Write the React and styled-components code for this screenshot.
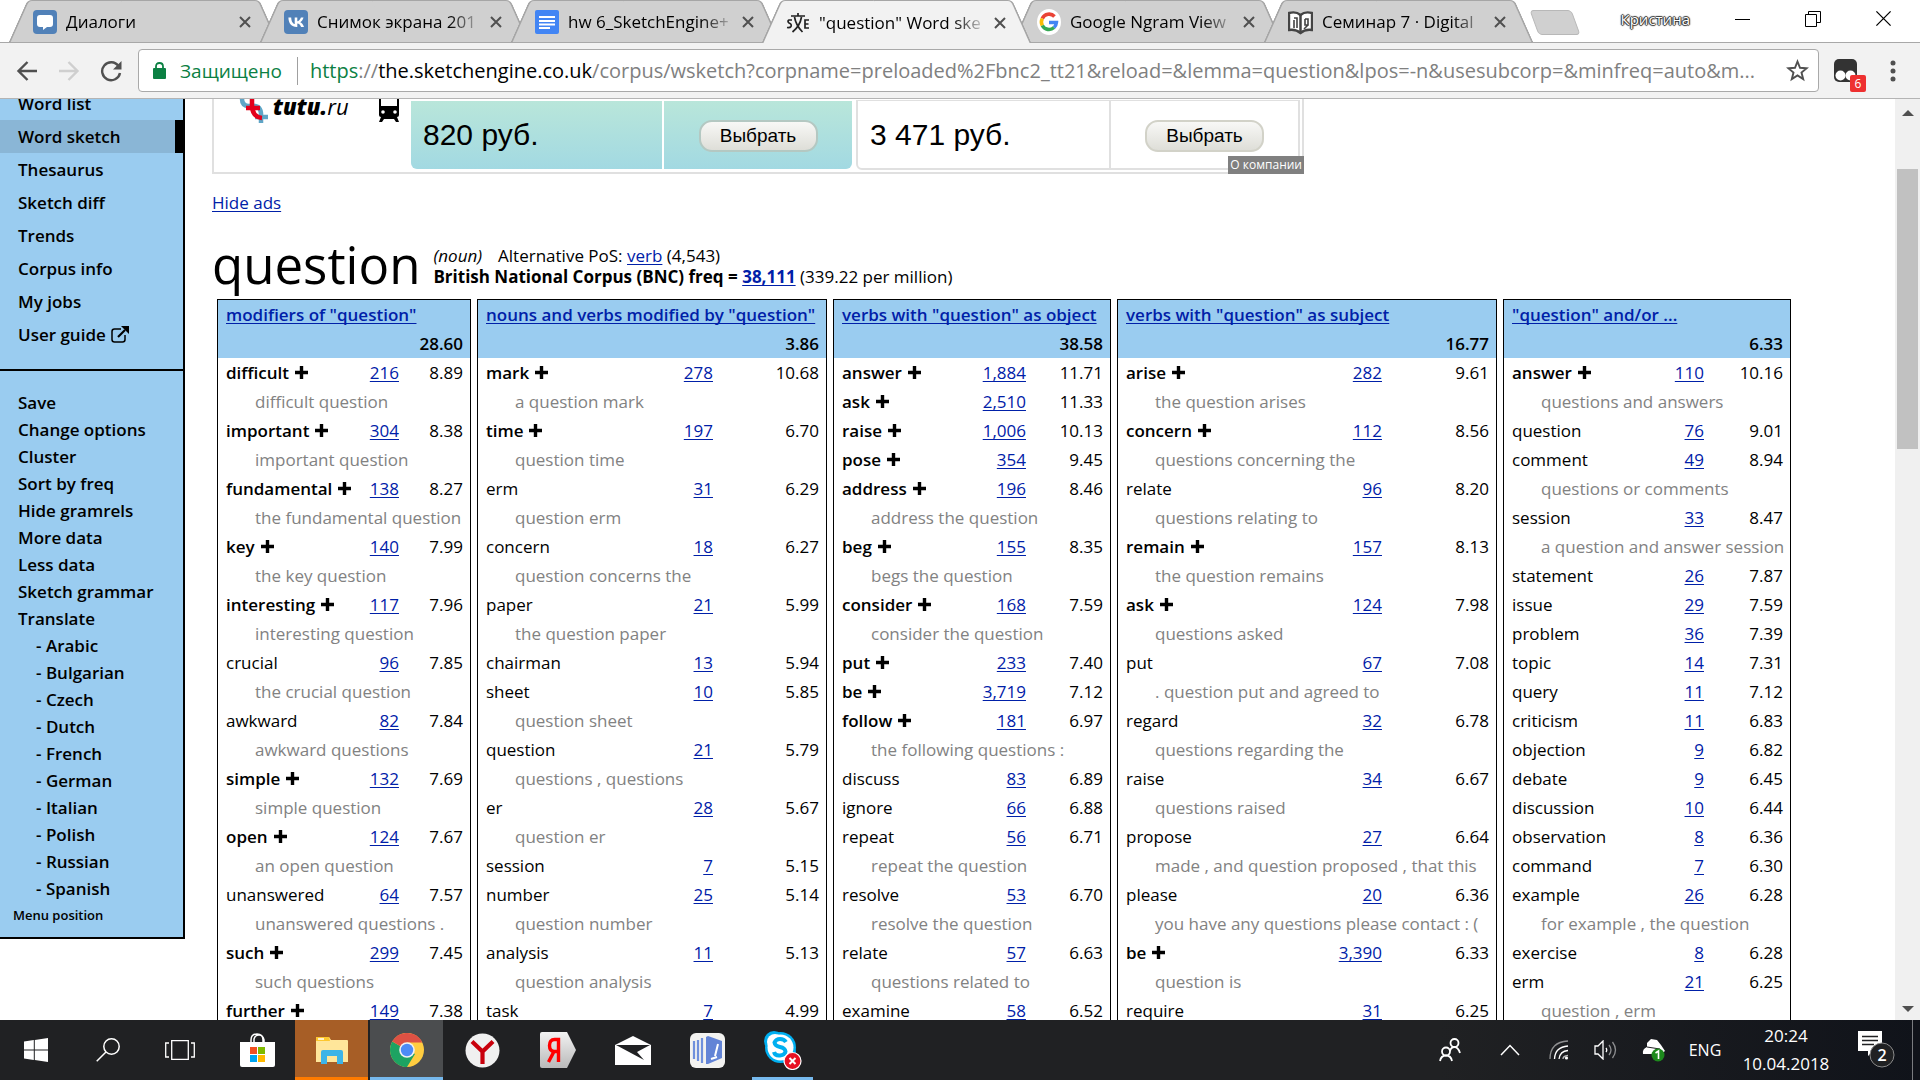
import React from "react";
import styled, { createGlobalStyle, css } from "styled-components";

const pageFont = `"Trebuchet MS", "Open Sans", "Noto Sans", sans-serif`;
const uiFont = `"Segoe UI", "Open Sans", "Noto Sans", sans-serif`;

const GlobalStyle = createGlobalStyle`
  * { box-sizing: border-box; }
  body { margin: 0; background: #fff; font-family: ${pageFont}; color: #000; }
  button { border: 0; padding: 0; margin: 0; background: none; font: inherit; color: inherit; }
  svg { display: block; flex: none; }
`;

const Screen = styled.div`
  height: 100vh;
  display: flex;
  flex-direction: column;
  overflow: hidden;
`;

/* ---------- browser window ---------- */

const TabStrip = styled.header`
  display: flex;
  height: 43px;
  flex: none;
  padding-left: 8px;
  border-bottom: 1px solid #a8a8a8;
  font-family: ${uiFont};
`;

const TabItem = styled.div`
  position: relative;
  display: flex;
  align-items: center;
  gap: 9px;
  flex: 0 1 271px;
  min-width: 0;
  height: ${(p) => (p.$active ? "43px" : "42px")};
  margin-right: -20px;
  padding: 2px 40px 0 25px;
  z-index: ${(p) => (p.$active ? 2 : 1)};
  isolation: isolate;

  &::before,
  &::after {
    content: "";
    position: absolute;
    z-index: -1;
    top: 0;
    bottom: 0;
    background: ${(p) => (p.$active ? "#f2f2f2" : "#d0d0d0")};
    border-top: 1px solid #a6a6a6;
  }
  &::before {
    left: 10px;
    right: 45%;
    border-left: 2px solid #a6a6a6;
    border-top-left-radius: 5px;
    transform: skewX(-24deg);
  }
  &::after {
    right: 10px;
    left: 45%;
    border-right: 2px solid #a6a6a6;
    border-top-right-radius: 5px;
    transform: skewX(24deg);
  }
`;

const TabTitle = styled.span`
  flex: 1;
  white-space: nowrap;
  font-size: 17px;
  line-height: 24px;
  mask-image: linear-gradient(to right, #000 calc(100% - 28px), rgba(0, 0, 0, 0.2));
`;

const TabClose = styled.button`
  width: 12px;
  height: 12px;
  margin-left: 4px;
  margin-right: -12px;
`;

const NewTab = styled.button`
  width: 42px;
  height: 25px;
  margin: 10px 0 0 20px;
  background: #d0d0d0;
  border: 1px solid #b8b8b8;
  border-radius: 4px;
  transform: skewX(20deg);
`;

const WindowControls = styled.div`
  margin-left: auto;
  display: flex;
  align-items: center;
  padding: 0 28px 5px 0;
  gap: 54px;
`;

const Profile = styled.button`
  font-size: 15px;
  line-height: 20px;
  color: #fff;
  text-shadow: 0 0 1px #222, 1px 0 1px #333, -1px 0 1px #333, 0 1px 1px #333, 0 -1px 1px #333;
  margin-right: -9px;
`;

const Toolbar = styled.nav`
  display: flex;
  align-items: center;
  height: 56px;
  flex: none;
  padding: 0 24px 0 16px;
  background: #f2f2f2;
  border-bottom: 1px solid #b4b4b4;
  font-family: ${uiFont};
`;

const NavButtons = styled.div`
  display: flex;
  gap: 20px;
  width: 122px;
`;

const AddressBar = styled.div`
  flex: 1;
  min-width: 0;
  display: flex;
  align-items: center;
  height: 43px;
  padding: 0 9px 0 14px;
  background: #fff;
  border: 1px solid #a9a9a9;
  border-radius: 4px;
  font-size: 20px;
  line-height: 28px;
`;

const Secure = styled.span`
  color: #0b8043;
  font-size: 19px;
  margin-left: 14px;
  padding-right: 15px;
  border-right: 1px solid #a0a0a0;
  margin-right: 12px;
`;

const UrlPart = styled.span`
  color: ${(p) => p.$color};
`;

const UrlInput = styled.input`
  flex: 1;
  min-width: 0;
  border: 0;
  padding: 0;
  outline: 0;
  background: none;
  font: inherit;
  color: #808080;
`;

const Extension = styled.button`
  position: relative;
  width: 24px;
  height: 24px;
  margin: 0 32px 0 15px;
`;

const Badge = styled.span`
  position: absolute;
  left: 16px;
  top: 16px;
  width: 16px;
  height: 17px;
  background: #ee3030;
  border-radius: 2px;
  color: #fff;
  font-size: 12px;
  line-height: 17px;
  text-align: center;
`;

const Viewport = styled.div`
  flex: 1;
  min-height: 0;
  display: flex;
`;

const PageArea = styled.div`
  flex: 1;
  min-width: 0;
  overflow: hidden;
`;

/* the page is scrolled, so its upper edge lies above the window */
const Page = styled.div`
  display: flex;
  align-items: flex-start;
  margin-top: -12px;
`;

const Scrollbar = styled.div`
  width: 25px;
  flex: none;
  display: flex;
  flex-direction: column;
  align-items: center;
  padding: 10px 0 8px;
  background: #f0f0f0;
`;

const Thumb = styled.div`
  width: 21px;
  height: 280px;
  margin: 53px 0 auto;
  background: #c1c1c1;
`;

const Arrow = styled.span`
  border: 6px solid transparent;
  ${(p) =>
    p.$down
      ? css`border-top-color: #505050; border-bottom: 0;`
      : css`border-bottom-color: #505050; border-top: 0; margin-top: 1px;`}
`;

/* ---------- left menu ---------- */

const Sidebar = styled.nav`
  width: 185px;
  flex: none;
  background: #9accf0;
  border-right: 2px solid #000;
  border-bottom: 2px solid #000;
  padding-bottom: 9px;
  font-size: 17px;
  font-weight: 600;
`;

const MenuLink = styled.a`
  display: flex;
  align-items: center;
  gap: 5px;
  height: ${(p) => (p.$small ? "27px" : "33px")};
  padding-left: ${(p) => (p.$indent ? "36px" : "18px")};
  color: #000;
  text-decoration: none;
  white-space: nowrap;
  ${(p) =>
    p.$current &&
    css`
      background: #8ab6d6;
      border-right: 8px solid #000;
    `}
`;

const MainMenu = styled.div`
  padding-bottom: 18px;
  border-bottom: 2px solid #000;
  margin-bottom: 18px;
`;

const MenuPosition = styled.a`
  display: block;
  padding-left: 13px;
  color: #000;
  text-decoration: none;
  font-size: 13px;
  line-height: 26px;
`;

/* ---------- advert ---------- */

const Main = styled.main`
  flex: 1;
  min-width: 0;
  padding: 0 104px 0 27px;
`;

const Ad = styled.section`
  position: relative;
  display: flex;
  align-items: flex-start;
  gap: 4px;
  width: 1092px;
  height: 87px;
  padding: 12px 2px 0 0;
  border: 2px solid #e0e0e0;
  border-top: 0;
  font-family: Arial, "Liberation Sans", sans-serif;
`;

const AdBrand = styled.div`
  display: flex;
  width: 193px;
  padding-left: 24px;
  font: italic 800 22px/14px "Open Sans", sans-serif;
`;

const BrandName = styled.span`
  width: 83px;
  margin: 0 23px 0 3px;
  white-space: nowrap;
`;

const Thin = styled.span`
  font-weight: 400;
`;

const Offer = styled.div`
  flex: ${(p) => (p.$hot ? "0 0 441px" : "1")};
  display: flex;
  height: ${(p) => (p.$hot ? "68px" : "70px")};
  margin-top: 2px;
  border-radius: 0 0 6px 6px;
  ${(p) =>
    p.$hot
      ? css`background: linear-gradient(#b9e6da, #a2d9e2);`
      : css`
          margin-top: 1px;
          border: 2px solid #e0e0e0;
          border-top-width: 1px;
        `}
`;

const Price = styled.div`
  width: 253px;
  padding: 16px 0 0 12px;
  font-size: 30px;
  line-height: 36px;
  border-right: 2px solid ${(p) => (p.$hot ? "#fff" : "#e0e0e0")};
`;

const Pick = styled.div`
  flex: 1;
  padding-top: 19px;
  text-align: center;
`;

const PickButton = styled.button`
  && {
    width: 119px;
    height: 32px;
    border: 2px solid ${(p) => (p.$hot ? "#b4c8c2" : "#d2d2c8")};
    border-radius: 13px;
    background: linear-gradient(#f8f8f6, #deded8);
    font-size: 19px;
    line-height: 24px;
  }
`;

const About = styled.a`
  position: absolute;
  right: -2px;
  bottom: -2px;
  padding: 0 2px;
  background: #808080;
  color: #fff;
  font: 12px/18px "Open Sans", sans-serif;
  text-decoration: none;
`;

/* ---------- word sketch ---------- */

const Link = styled.a`
  color: #0020a8;
  text-decoration: underline;
  text-underline-offset: 2px;
  text-decoration-skip-ink: none;
`;

const HideAds = styled.p`
  margin: 17px 0 0;
  font-size: 17px;
  line-height: 24px;
`;

const Heading = styled.div`
  display: flex;
  align-items: flex-start;
  gap: 13px;
  margin-top: 21px;
`;

const Lemma = styled.h1`
  margin: 0;
  font-size: 51px;
  line-height: 56px;
  font-weight: 400;
`;

const Info = styled.div`
  padding-top: 9px;
  font-size: 17px;
  line-height: 21px;
`;

const Pos = styled.em`
  margin-right: 16px;
`;

const Sketches = styled.div`
  display: grid;
  grid-template-columns: 254fr 350fr 278fr 380fr 288fr;
  gap: 6px;
  margin: 7px 0 0 5px;
`;

const Gramrel = styled.div`
  min-width: 0;
  border: 1px solid #000;
`;

const Table = styled.table`
  width: 100%;
  table-layout: fixed;
  border-collapse: collapse;
  font-size: 17px;
  line-height: 29px;

  td, th { padding: 0 7px 0 8px; white-space: nowrap; height: 29px; }
  th { background: #9accf0; font-weight: 600; }
`;

const Col = styled.col`
  width: ${(p) => p.$w}px;
`;

const Title = styled.th`
  text-align: left;
`;

const Score = styled.td`
  text-align: right;
`;

const Total = styled.th`
  text-align: right;
`;

const Freq = styled.td`
  && { padding-right: 0; }
  text-align: right;
`;

const Word = styled.td`
  font-weight: ${(p) => (p.$more ? 600 : 400)};
`;

const Example = styled.td`
  && { padding: 0 0 0 37px; }
  color: #828282;
`;

const PlusIcon = styled.svg`
  display: inline-block;
  margin-left: 6px;
`;

/* ---------- taskbar ---------- */

const Taskbar = styled.footer`
  display: flex;
  height: 60px;
  flex: none;
  background: linear-gradient(90deg, #202123 75%, #10131a);
  color: #fff;
  font-family: ${uiFont};
`;

const Pinned = styled.div`
  display: flex;
  margin-left: 4px;
`;

const TaskButton = styled.button`
  && {
    display: flex;
    align-items: center;
    justify-content: center;
    width: ${(p) => (p.$wide ? 75 : 72)}px;
    height: 60px;
    border-right: ${(p) => (p.$tile ? "2px solid #202123" : "0")};
    ${(p) =>
      p.$tile &&
      css`
        background: linear-gradient(${p.$bar}, ${p.$bar}) bottom / 100% 3px no-repeat ${p.$tile};
      `}
    ${(p) =>
      p.$bar &&
      !p.$tile &&
      css`
        background: linear-gradient(${p.$bar}, ${p.$bar}) bottom / 61px 3px no-repeat;
      `}
  }
`;

const Tray = styled.div`
  margin-left: auto;
  display: flex;
  align-items: center;
  padding-right: 7px;
`;

const TrayButton = styled.button`
  display: flex;
  justify-content: center;
  width: ${(p) => p.$w}px;
`;

const Language = styled.button`
  width: 54px;
  font-size: 16px;
`;

const Clock = styled.time`
  width: 108px;
  text-align: center;
  font-size: 17px;
  line-height: 28px;
`;

const Notice = styled.button`
  display: flex;
  width: 72px;
  padding-left: 18px;
`;

const Edge = styled.span`
  align-self: stretch;
  width: 1px;
  background: #7a7c80;
`;

/* ---------- drawings ---------- */

const Cross = ({ s = 12, w = 2, c = "#505050" }) => (
  <svg width={s} height={s} viewBox="0 0 12 12" stroke={c} strokeWidth={w} fill="none">
    <path d="M1 1l10 10M11 1L1 11" />
  </svg>
);

const Plus = () => (
  <PlusIcon width="13" height="13" viewBox="0 0 13 13">
    <path d="M6.500 0v13M0 6.500h13" stroke="#000" strokeWidth="3.400" />
  </PlusIcon>
);

const favicons = {
  dialogs: (
    <svg width="24" height="24" viewBox="0 0 24 24">
      <rect width="24" height="24" rx="4" fill="#5181b8" />
      <path d="M7 5h10q3 0 3 3v6q0 3-3 3h-3l-4 3v-3H7q-3 0-3-3V8q0-3 3-3z" fill="#fff" />
    </svg>
  ),
  vk: (
    <svg width="24" height="24" viewBox="0 0 24 24">
      <rect width="24" height="24" rx="4" fill="#5181b8" />
      <path d="M12.700 17C7.500 17 4.600 13.500 4.400 7.500h2.800c.1 4.400 2 6.200 3.500 6.600V7.500h2.600v3.800c1.500-.2 3.100-1.900 3.600-3.800h2.600c-.4 2.300-2.100 4-3.300 4.700 1.200.6 3.100 2 3.800 4.800h-2.900c-.6-1.800-2-3.200-3.800-3.400V17z" fill="#fff" />
    </svg>
  ),
  doc: (
    <svg width="24" height="24" viewBox="0 0 24 24">
      <rect width="24" height="24" rx="2" fill="#4285f4" />
      <path d="M4 7h16M4 11h16M4 14.500h16M4 18h11" stroke="#fff" strokeWidth="1.800" />
    </svg>
  ),
  sketch: (
    <svg width="24" height="24" viewBox="0 0 24 24" fill="none" stroke="#222" strokeWidth="1.700">
      <path d="M5 5h14M12 2v3M8.500 6c1 6 4 11 8 15M15.500 6c-1 6-4 11-9 15" />
      <path d="M6 9H3q-2 1 0 3 3 1 2 3.500Q4 17 1 16.500M23 9h-4v8h4M19 13h3.500" />
    </svg>
  ),
  google: (
    <svg width="24" height="28" viewBox="0 0 24 28">
      <ellipse cx="12" cy="14" rx="12" ry="13" fill="#fff" />
      <g fill="none" strokeWidth="3.600">
        <path d="M17.500 8.500A7.500 7.500 0 0 0 5.300 10.500" stroke="#ea4335" />
        <path d="M5.300 10.500a7.500 7.500 0 0 0 0 7" stroke="#fbbc05" />
        <path d="M5.300 17.500a7.500 7.500 0 0 0 11.700 2" stroke="#34a853" />
        <path d="M17 19.500a7.500 7.500 0 0 0 2.400-5H12" stroke="#4285f4" />
      </g>
    </svg>
  ),
  book: (
    <svg width="25" height="25" viewBox="0 0 25 25">
      <path d="M1 3q7-2 11.500 2Q17 1 24 3v17q-7-1-11.500 3Q8 19 1 20z" fill="#fff" stroke="#444" strokeWidth="2.400" />
      <path d="M12.500 5v17" stroke="#444" strokeWidth="2.500" />
      <path d="M6 18V10M9 18V8H6M17 9v6h3V9h-3M20 15l-4 4" fill="none" stroke="#444" strokeWidth="1.600" />
    </svg>
  ),
};

const ExternalIcon = () => (
  <svg width="18" height="18" viewBox="0 0 18 18" fill="none" stroke="#000" strokeWidth="1.500">
    <path d="M10 3H3.500Q1 3 1 5.500v8Q1 16 3.500 16h8q2.500 0 2.500-2.500V9" />
    <path d="M7 11l7-7" strokeWidth="2.200" />
    <path d="M10 0h8v8z" fill="#000" stroke="none" />
  </svg>
);

const taskIcons = {
  start: (
    <svg width="24" height="24" viewBox="0 0 24 24" fill="#fff">
      <path d="M0 3.500L9.800 2v9.500H0zM10.800 1.900L24 0v11.500H10.800zM0 12.500h9.800V22L0 20.600zM10.800 12.500H24V24l-13.200-1.900z" />
    </svg>
  ),
  search: (
    <svg width="24" height="24" viewBox="0 0 24 24" fill="none" stroke="#fff" strokeWidth="1.500">
      <circle cx="15.500" cy="8.500" r="7.700" />
      <path d="M10 14L.7 23.300" />
    </svg>
  ),
  view: (
    <svg width="30" height="22" viewBox="0 0 30 22" fill="none" stroke="#fff" strokeWidth="1.300">
      <path d="M6.700 1.700h16.600v18.600H6.700zM4 4H.7v14H4M26 4h3.300v14H26" />
    </svg>
  ),
  store: (
    <svg width="35" height="35" viewBox="0 0 35 35">
      <path d="M11 9V7q0-6 6-6t6 6v2M14 9V6q1-4 5-4t5 5v2" fill="none" stroke="#fff" strokeWidth="1.500" />
      <path d="M0 9h35v23q0 2-2 2H2q-2 0-2-2z" fill="#fff" />
      <path d="M10 14h7v7h-7z" fill="#f25022" />
      <path d="M18 14h7v7h-7z" fill="#7fba00" />
      <path d="M10 22h7v7h-7z" fill="#00a4ef" />
      <path d="M18 22h7v7h-7z" fill="#ffb900" />
    </svg>
  ),
  files: (
    <svg width="32" height="27" viewBox="0 0 32 27">
      <path d="M0 1q0-1 1-1h12l2 3h16q1 0 1 1v21H0z" fill="#ffe69a" />
      <path d="M0 1q0-1 1-1h12l1 4H0z" fill="#fdc72e" />
      <path d="M2 2h6" stroke="#fff" strokeWidth="1.500" />
      <path d="M5 27V15q0-2 2-2h18q2 0 2 2v12h-6v-8H11v8z" fill="#3cb4e7" />
    </svg>
  ),
  chrome: (
    <svg width="34" height="34" viewBox="0 0 34 34">
      <circle cx="17" cy="17" r="17" fill="#ffcd40" />
      <path d="M17 17L2.300 8.500A17 17 0 0 0 17 34l8-13z" fill="#1da362" />
      <path d="M17 17L2.300 8.500A17 17 0 0 1 32.300 9.500H17z" fill="#dd5144" />
      <circle cx="17" cy="17" r="7.800" fill="#f1f1f1" />
      <circle cx="17" cy="17" r="6.200" fill="#4c8bf5" />
    </svg>
  ),
  yandex: (
    <svg width="35" height="35" viewBox="0 0 35 35">
      <circle cx="17.500" cy="17.500" r="17" fill="#f0f0f0" />
      <path d="M7 8.500l10.500 10 10.500-10M17.500 18v13" fill="none" stroke="#c9000c" strokeWidth="4.200" />
    </svg>
  ),
  ya: (
    <svg width="36" height="36" viewBox="0 0 36 36">
      <defs>
        <linearGradient id="tag" x2="0" y2="1">
          <stop stopColor="#f2f2f2" />
          <stop offset="1" stopColor="#b9b9b9" />
        </linearGradient>
      </defs>
      <path d="M0 2q0-2 2-2h25l9 18-9 18H2q-2 0-2-2z" fill="url(#tag)" />
      <path d="M18.500 30V7.500h-4q-5 0-5 6t5 6h4M14 19.500L8.500 30" fill="none" stroke="#f00" strokeWidth="3.400" />
    </svg>
  ),
  mail: (
    <svg width="36" height="29" viewBox="0 0 36 29">
      <path d="M0 9L18 0l18 9v20H0z" fill="#fff" />
      <path d="M1 9h34L22 16l7 8z" fill="#202123" />
    </svg>
  ),
  notes: (
    <svg width="35" height="35" viewBox="0 0 35 35">
      <rect width="35" height="35" rx="6" fill="#f2f2f0" />
      <path d="M4 8v18M8 7v21M12 5v25" stroke="#6f90dc" strokeWidth="2.200" />
      <path d="M16 4l2-1 14 5v17l-14 6h-2z" fill="#6384d6" />
      <path d="M28 11l-3 12M21 26l6-2" stroke="#fff" strokeWidth="2" />
    </svg>
  ),
  skype: (
    <svg width="40" height="40" viewBox="0 0 40 40">
      <circle cx="11" cy="11" r="10" fill="#00aff0" />
      <circle cx="23" cy="23" r="10" fill="#00aff0" />
      <circle cx="17.500" cy="17.500" r="15.500" fill="#00aff0" />
      <circle cx="17.500" cy="17.500" r="13" fill="#fff" />
      <circle cx="12" cy="12" r="8" fill="#fff" />
      <path d="M23 12q-2-3-6-3t-5.500 3.500Q12 16 17 17t5.500 4.500Q22 25 17 25.500T11 22" fill="none" stroke="#00aff0" strokeWidth="4" />
      <circle cx="29.500" cy="31" r="8.500" fill="#e81123" stroke="#fff" strokeWidth="1.200" />
      <path d="M26.500 28l6 6M32.500 28l-6 6" stroke="#fff" strokeWidth="2" />
    </svg>
  ),
};

/* ---------- data ---------- */

const tabs = [
  ["dialogs", "Диалоги"],
  ["vk", "Снимок экрана 201"],
  ["doc", "hw 6_SketchEngine+"],
  ["sketch", "\"question\" Word ske", true],
  ["google", "Google Ngram View"],
  ["book", "Семинар 7 · Digital"],
];

const mainMenu = ["Word list", "Word sketch", "Thesaurus", "Sketch diff", "Trends", "Corpus info", "My jobs", "User guide"];
const tools = ["Save", "Change options", "Cluster", "Sort by freq", "Hide gramrels", "More data", "Less data", "Sketch grammar", "Translate"];
const languages = ["Arabic", "Bulgarian", "Czech", "Dutch", "French", "German", "Italian", "Polish", "Russian", "Spanish"];

/* each line: word | frequency | score | example; "+" after a word marks a multiword link */
const gramrels = [
  {
    title: "modifiers of \"question\"", total: "28.60", score: 71, freq: 60,
    lines: `difficult+|216|8.89|difficult question
important+|304|8.38|important question
fundamental+|138|8.27|the fundamental question
key+|140|7.99|the key question
interesting+|117|7.96|interesting question
crucial|96|7.85|the crucial question
awkward|82|7.84|awkward questions
simple+|132|7.69|simple question
open+|124|7.67|an open question
unanswered|64|7.57|unanswered questions .
such+|299|7.45|such questions
further+|149|7.38`,
  },
  {
    title: "nouns and verbs modified by \"question\"", total: "3.86", score: 113, freq: 90,
    lines: `mark+|278|10.68|a question mark
time+|197|6.70|question time
erm|31|6.29|question erm
concern|18|6.27|question concerns the
paper|21|5.99|the question paper
chairman|13|5.94
sheet|10|5.85|question sheet
question|21|5.79|questions , questions
er|28|5.67|question er
session|7|5.15
number|25|5.14|question number
analysis|11|5.13|question analysis
task|7|4.99`,
  },
  {
    title: "verbs with \"question\" as object", total: "38.58", score: 84, freq: 70,
    lines: `answer+|1,884|11.71
ask+|2,510|11.33
raise+|1,006|10.13
pose+|354|9.45
address+|196|8.46|address the question
beg+|155|8.35|begs the question
consider+|168|7.59|consider the question
put+|233|7.40
be+|3,719|7.12
follow+|181|6.97|the following questions :
discuss|83|6.89
ignore|66|6.88
repeat|56|6.71|repeat the question
resolve|53|6.70|resolve the question
relate|57|6.63|questions related to
examine|58|6.52`,
  },
  {
    title: "verbs with \"question\" as subject", total: "16.77", score: 114, freq: 90,
    lines: `arise+|282|9.61|the question arises
concern+|112|8.56|questions concerning the
relate|96|8.20|questions relating to
remain+|157|8.13|the question remains
ask+|124|7.98|questions asked
put|67|7.08|. question put and agreed to
regard|32|6.78|questions regarding the
raise|34|6.67|questions raised
propose|27|6.64|made , and question proposed , that this
please|20|6.36|you have any questions please contact : (
be+|3,390|6.33|question is
require|31|6.25`,
  },
  {
    title: "\"question\" and/or ...", total: "6.33", score: 86, freq: 70,
    lines: `answer+|110|10.16|questions and answers
question|76|9.01
comment|49|8.94|questions or comments
session|33|8.47|a question and answer session
statement|26|7.87
issue|29|7.59
problem|36|7.39
topic|14|7.31
query|11|7.12
criticism|11|6.83
objection|9|6.82
debate|9|6.45
discussion|10|6.44
observation|8|6.36
command|7|6.30
example|26|6.28|for example , the question
exercise|8|6.28
erm|21|6.25|question , erm`,
  },
];

function SketchTable({ data }) {
  return (
    <Gramrel>
      <Table>
        <colgroup>
          <col />
          <Col $w={data.freq} />
          <Col $w={data.score} />
        </colgroup>
        <thead>
          <tr>
            <Title colSpan={3}><Link href="#">{data.title}</Link></Title>
          </tr>
          <tr>
            <Total colSpan={3}>{data.total}</Total>
          </tr>
        </thead>
        <tbody>
          {data.lines.split("\n").map((line) => {
            const [name, freq, score, example] = line.split("|");
            const more = name.endsWith("+");
            return (
              <React.Fragment key={name}>
                <tr>
                  <Word $more={more}>{more ? name.slice(0, -1) : name}{more && <Plus />}</Word>
                  <Freq><Link href="#">{freq}</Link></Freq>
                  <Score>{score}</Score>
                </tr>
                {example && <tr><Example colSpan={3}>{example}</Example></tr>}
              </React.Fragment>
            );
          })}
        </tbody>
      </Table>
    </Gramrel>
  );
}

export default function App() {
  return (
    <Screen>
      <GlobalStyle />
      <TabStrip>
        {tabs.map(([icon, title, active]) => (
          <TabItem key={title} $active={active}>
            {favicons[icon]}
            <TabTitle>{title}</TabTitle>
            <TabClose aria-label="Close tab"><Cross /></TabClose>
          </TabItem>
        ))}
        <NewTab aria-label="New tab" />
        <WindowControls>
          <Profile>Кристина</Profile>
          <button aria-label="Minimize">
            <svg width="16" height="16" viewBox="0 0 16 16"><path d="M0 8.500h15" stroke="#000" /></svg>
          </button>
          <button aria-label="Restore">
            <svg width="16" height="16" viewBox="0 0 16 16" fill="none" stroke="#000"><path d="M.5 3.500h11v12H.5zM3.500 3V.5h12v11H12" /></svg>
          </button>
          <button aria-label="Close window"><Cross s={17} w={0.9} c="#000" /></button>
        </WindowControls>
      </TabStrip>

      <Toolbar>
        <NavButtons>
          <button aria-label="Back">
            <svg width="22" height="22" viewBox="0 0 22 22" fill="none" stroke="#505050" strokeWidth="2.400"><path d="M21 11H3M11.500 2L2.500 11l9 9" /></svg>
          </button>
          <button aria-label="Forward">
            <svg width="22" height="22" viewBox="0 0 22 22" fill="none" stroke="#cfcfcf" strokeWidth="2.400"><path d="M1 11h18M10.500 2l9 9-9 9" /></svg>
          </button>
          <button aria-label="Reload">
            <svg width="22" height="22" viewBox="0 0 22 22" fill="none" stroke="#505050" strokeWidth="2.400">
              <path d="M18.500 6A9 9 0 1 0 20 13" />
              <path d="M21.500 1v8.500H13z" fill="#505050" stroke="none" />
            </svg>
          </button>
        </NavButtons>
        <AddressBar>
          <svg width="13" height="17" viewBox="0 0 13 17">
            <path d="M0 7q0-1 1-1h11q1 0 1 1v9q0 1-1 1H1q-1 0-1-1z" fill="#0b8043" />
            <path d="M3 7V4.500q0-3.500 3.500-3.500T10 4.500V7" fill="none" stroke="#0b8043" strokeWidth="1.800" />
          </svg>
          <Secure>Защищено</Secure>
          <UrlPart $color="#0b8043">https</UrlPart>
          <UrlPart $color="#808080">://</UrlPart>
          <UrlPart $color="#000">the.sketchengine.co.uk</UrlPart>
          <UrlInput
            aria-label="Address"
            defaultValue="/corpus/wsketch?corpname=preloaded%2Fbnc2_tt21&reload=&lemma=question&lpos=-n&usesubcorp=&minfreq=auto&m..."
          />
          <button aria-label="Bookmark this page">
            <svg width="23" height="23" viewBox="0 0 23 23" fill="none" stroke="#505050" strokeWidth="1.900">
              <path d="M11.500 2.500l2.500 6.300 6.700.4-5.200 4.300 1.700 6.600-5.700-3.700-5.700 3.700 1.700-6.600-5.200-4.300 6.700-.4z" />
            </svg>
          </button>
        </AddressBar>
        <Extension aria-label="Extension">
          <svg width="24" height="24" viewBox="0 0 24 24">
            <rect width="23" height="23" rx="5" fill="#333" />
            <circle cx="6.500" cy="16.500" r="5" fill="#fff" />
            <circle cx="16.500" cy="16.500" r="5" fill="#fff" />
          </svg>
          <Badge>6</Badge>
        </Extension>
        <button aria-label="Menu">
          <svg width="6" height="22" viewBox="0 0 6 22" fill="#505050">
            <circle cx="3" cy="3" r="2.500" /><circle cx="3" cy="11" r="2.500" /><circle cx="3" cy="19" r="2.500" />
          </svg>
        </button>
      </Toolbar>

      <Viewport>
        <PageArea>
          <Page>
            <Sidebar>
              <MainMenu>
                {mainMenu.map((m) => (
                  <MenuLink key={m} href="#" $current={m === "Word sketch"}>
                    {m}
                    {m === "User guide" && <ExternalIcon />}
                  </MenuLink>
                ))}
              </MainMenu>
              {tools.map((m) => <MenuLink key={m} href="#" $small>{m}</MenuLink>)}
              {languages.map((m) => <MenuLink key={m} href="#" $small $indent>- {m}</MenuLink>)}
              <MenuPosition href="#">Menu position</MenuPosition>
            </Sidebar>

            <Main>
              <Ad>
                <AdBrand>
                  <svg width="32" height="24" viewBox="0 0 32 24" fill="none" strokeWidth="4.500">
                    <path d="M4 0q0 7 7 7 11-2 12 7v10M17 18h13" stroke="#5fa5c6" />
                    <path d="M14 0v6q0 12 10 13M8 9h14" stroke="#e3001b" />
                  </svg>
                  <BrandName>tutu.<Thin>ru</Thin></BrandName>
                  <svg width="20" height="24" viewBox="0 0 20 24">
                    <path d="M0 0h20v16q0 2-2 2l2 5h-3l-2-3H5l-2 3H0l2-5q-2 0-2-2z" />
                    <path d="M2 0h16v7H2z" fill="#fff" />
                    <circle cx="4" cy="13" r="1.800" fill="#fff" />
                    <circle cx="16" cy="13" r="1.800" fill="#fff" />
                  </svg>
                </AdBrand>
                <Offer $hot>
                  <Price $hot>820 руб.</Price>
                  <Pick><PickButton $hot>Выбрать</PickButton></Pick>
                </Offer>
                <Offer>
                  <Price>3 471 руб.</Price>
                  <Pick><PickButton>Выбрать</PickButton></Pick>
                </Offer>
                <About href="#">О компании</About>
              </Ad>

              <HideAds><Link href="#">Hide ads</Link></HideAds>

              <Heading>
                <Lemma>question</Lemma>
                <Info>
                  <div><Pos>(noun)</Pos>Alternative PoS: <Link href="#">verb</Link> (4,543)</div>
                  <div><b>British National Corpus (BNC) freq = <Link href="#">38,111</Link></b> (339.22 per million)</div>
                </Info>
              </Heading>

              <Sketches>
                {gramrels.map((g) => <SketchTable key={g.title} data={g} />)}
              </Sketches>
            </Main>
          </Page>
        </PageArea>
        <Scrollbar>
          <Arrow />
          <Thumb />
          <Arrow $down />
        </Scrollbar>
      </Viewport>

      <Taskbar>
        <TaskButton aria-label="Start">{taskIcons.start}</TaskButton>
        <TaskButton aria-label="Search">{taskIcons.search}</TaskButton>
        <TaskButton aria-label="Task view">{taskIcons.view}</TaskButton>
        <Pinned>
          <TaskButton $wide aria-label="Store">{taskIcons.store}</TaskButton>
          <TaskButton $wide $tile="#a75e26" $bar="#ff7b00" aria-label="File Explorer">{taskIcons.files}</TaskButton>
          <TaskButton $wide $tile="#4b4d4f" $bar="#76b9ed" aria-label="Chrome">{taskIcons.chrome}</TaskButton>
          <TaskButton $wide aria-label="Yandex Browser">{taskIcons.yandex}</TaskButton>
          <TaskButton $wide aria-label="Yandex">{taskIcons.ya}</TaskButton>
          <TaskButton $wide aria-label="Mail">{taskIcons.mail}</TaskButton>
          <TaskButton $wide aria-label="Notes">{taskIcons.notes}</TaskButton>
          <TaskButton $wide $bar="#76b9ed" aria-label="Skype">{taskIcons.skype}</TaskButton>
        </Pinned>
        <Tray>
          <TrayButton $w={68} aria-label="People">
            <svg width="22" height="24" viewBox="0 0 22 24" fill="none" stroke="#fff" strokeWidth="1.800">
              <circle cx="15.500" cy="5" r="4" /><path d="M11 13q1-4 4.500-4t5.500 6" />
              <circle cx="7" cy="13.500" r="4" /><path d="M1 23q1-5.500 6-5.500t6 5.500" />
            </svg>
          </TrayButton>
          <TrayButton $w={52} aria-label="Show hidden icons">
            <svg width="20" height="12" viewBox="0 0 20 12" fill="none" stroke="#fff" strokeWidth="1.500"><path d="M1 11l9-9.500L19 11" /></svg>
          </TrayButton>
          <TrayButton $w={46} aria-label="Network">
            <svg width="20" height="20" viewBox="0 0 20 20" fill="none" stroke="#fff" strokeWidth="1.300">
              <path d="M1 19Q1 2 19 1" opacity=".5" /><path d="M5.500 19Q6 7 19 6M10 19q1-8 9-8.500" />
              <path d="M14 19q0-3 5-3.500" opacity=".7" /><circle cx="17.500" cy="18" r="1.600" fill="#fff" stroke="none" />
            </svg>
          </TrayButton>
          <TrayButton $w={48} aria-label="Volume">
            <svg width="24" height="20" viewBox="0 0 24 20" fill="none" stroke="#fff" strokeWidth="1.300">
              <path d="M1 6h3l5-5v18l-5-5H1zM12 8q1.500 2 0 4" /><path d="M15 5q4 5 0 10M18.500 2q6 8 0 16" opacity=".5" />
            </svg>
          </TrayButton>
          <TrayButton $w={48} aria-label="Updates">
            <svg width="24" height="24" viewBox="0 0 24 24">
              <path d="M5 5l4-4 6 1 4 5 4 6-4 3H1q-1-5 4-7z" fill="#fff" />
              <path d="M5 9l13 2" stroke="#202123" />
              <circle cx="16" cy="17" r="6.500" fill="#1d8a1d" />
              <path d="M13.500 15l3-2v8" stroke="#fff" strokeWidth="1.600" fill="none" />
            </svg>
          </TrayButton>
          <Language>ENG</Language>
          <Clock>20:24<br />10.04.2018</Clock>
          <Notice aria-label="Notifications">
            <svg width="38" height="38" viewBox="0 0 38 38">
              <path d="M0 0h24v20h-9l-5 5v-5H0z" fill="#fff" />
              <path d="M4 5.500h16M4 9.500h16M4 13.500h12" stroke="#202123" strokeWidth="1.300" />
              <circle cx="24" cy="24" r="12" fill="#202123" stroke="#8a8a8a" />
              <text x="24" y="30" textAnchor="middle" fontSize="16" fontWeight="600" fill="#fff">2</text>
            </svg>
          </Notice>
          <Edge />
        </Tray>
      </Taskbar>
    </Screen>
  );
}
